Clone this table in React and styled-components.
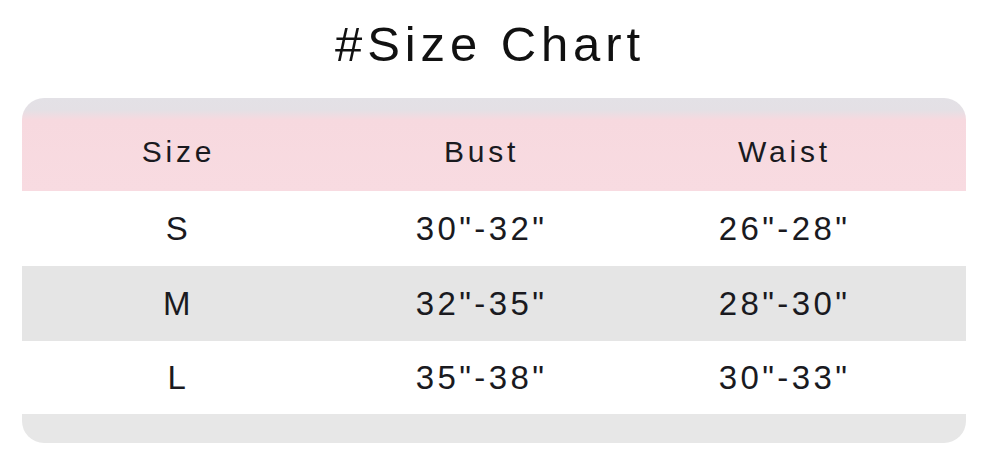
import React from "react";
import styled, { createGlobalStyle } from "styled-components";

const Global = createGlobalStyle`
  html, body { margin: 0; padding: 0; background: #ffffff; }
  body { font-family: "Liberation Sans", Arial, sans-serif; color: #1a1a1f; }
`;

const Page = styled.div`
  width: 988px;
  height: 462px;
  box-sizing: border-box;
  padding: 0 22px;
  display: flex;
  flex-direction: column;
`;

const Title = styled.h1`
  margin: 0;
  height: 98px;
  display: flex;
  align-items: center;
  justify-content: center;
  padding: 0 8px 10px 0;
  box-sizing: border-box;
  font-size: 49px;
  font-weight: 400;
  letter-spacing: 4.9px;
  color: #111;
`;

const Table = styled.div`
  width: 944px;
  border-radius: 22px;
  overflow: hidden;
  display: flex;
  flex-direction: column;
`;

const Row = styled.div`
  display: grid;
  grid-template-columns: repeat(3, 303px);
  padding-left: 5px;
  height: ${(p) => p.$h}px;
  align-items: center;
  background: ${(p) => p.$bg};
`;

const Cell = styled.div`
  text-align: center;
  font-size: ${(p) => (p.$head ? 30 : 33)}px;
  letter-spacing: ${(p) => (p.$head ? 3.8 : 3.4)}px;
  color: #1a1a1f;
  padding-top: ${(p) => (p.$head ? 14 : 0)}px;
`;

const Footer = styled.div`
  height: 29px;
  background: #e7e7e7;
`;

const header = ["Size", "Bust", "Waist"];
const rows = [
  ["S", '30"-32"', '26"-28"'],
  ["M", '32"-35"', '28"-30"'],
  ["L", '35"-38"', '30"-33"'],
];

export default function App() {
  return (
    <>
      <Global />
      <Page>
        <Title>#Size Chart</Title>
        <Table>
          <Row
            $h={93}
            $bg="linear-gradient(180deg, #e3e1e6 0px, #e4e0e5 12px, #f7d9df 22px, #f8dbe1 100%)"
          >
            {header.map((h) => (
              <Cell key={h} $head>
                {h}
              </Cell>
            ))}
          </Row>
          {rows.map((r, i) => (
            <Row key={r[0]} $h={i === 2 ? 73 : 75} $bg={i === 1 ? "#e5e5e5" : "#ffffff"}>
              {r.map((c, j) => (
                <Cell key={j}>{c}</Cell>
              ))}
            </Row>
          ))}
          <Footer />
        </Table>
      </Page>
    </>
  );
}
